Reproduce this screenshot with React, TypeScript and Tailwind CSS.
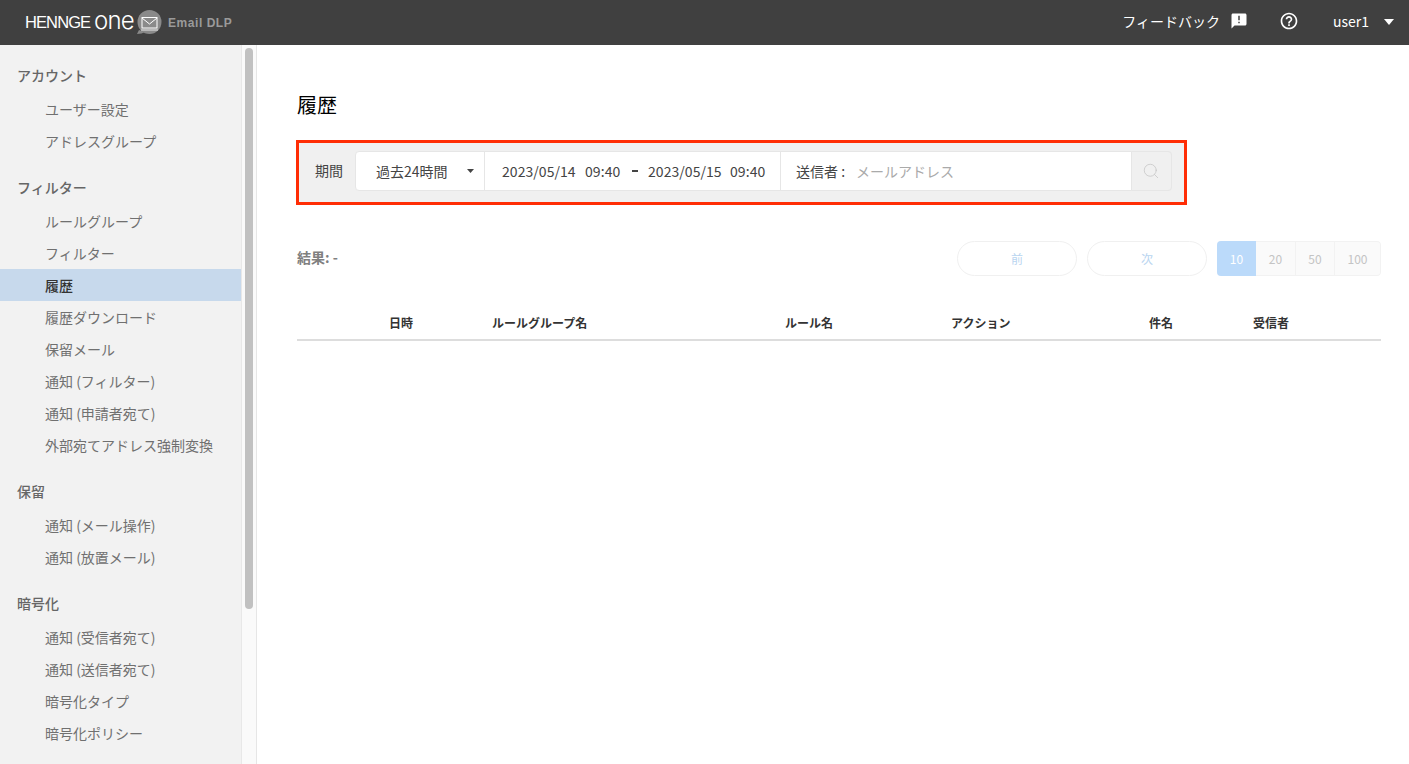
import React from 'react';
import { MdAnnouncement, MdHelpOutline } from 'react-icons/md';
import { Search } from 'lucide-react';

const font = '[font-family:"Noto_Sans_CJK_JP","Noto_Sans",sans-serif]';

const sections = [
  { title: 'アカウント', items: ['ユーザー設定', 'アドレスグループ'] },
  {
    title: 'フィルター',
    items: ['ルールグループ', 'フィルター', '履歴', '履歴ダウンロード', '保留メール', '通知 (フィルター)', '通知 (申請者宛て)', '外部宛てアドレス強制変換'],
  },
  { title: '保留', items: ['通知 (メール操作)', '通知 (放置メール)'] },
  { title: '暗号化', items: ['通知 (受信者宛て)', '通知 (送信者宛て)', '暗号化タイプ', '暗号化ポリシー'] },
];

const MailLogo = () => (
  <svg width="26" height="26" viewBox="0 0 26 26" className="shrink-0">
    <circle cx="13.5" cy="12" r="12" fill="#8a8a8a" />
    <path d="M3 20 L1 24 Q6 24 9 22 Z" fill="#8a8a8a" />
    <rect x="6" y="7.5" width="15" height="10.5" fill="none" stroke="#fff" strokeWidth="1" />
    <path d="M6 8 L13.5 14 L21 8" fill="none" stroke="#fff" strokeWidth="1" />
    <path d="M5 20 H22" stroke="#fff" strokeWidth="0.8" />
  </svg>
);

const Header = () => (
  <header className="h-[45px] shrink-0 bg-[#404040] flex items-center text-white pl-[25px] pr-[15px]">
    <span className="[font-family:'Liberation_Sans',sans-serif] text-[16.5px] tracking-[-0.9px] leading-none w-[69px]">HENNGE</span>
    <span className="[font-family:Inter,sans-serif] font-light text-[24px] leading-none -mt-[3px] tracking-[-0.8px] w-[40px]">one</span>
    <span className="ml-[2px] mt-[1px]"><MailLogo /></span>
    <span className="[font-family:'Liberation_Sans',sans-serif] font-bold text-[12px] tracking-[0.55px] text-[#9a9a9a] ml-[6px]">Email DLP</span>
    <div className="ml-auto flex items-center text-sm pb-[3px]">
      <span>フィードバック</span>
      <MdAnnouncement className="ml-[10px] text-[18px]" />
      <MdHelpOutline className="ml-[31px] text-[20px]" />
      <span className="ml-[34px]">user1</span>
      <svg width="10" height="6" viewBox="0 0 10 6" className="ml-[15px] mt-[2px]">
        <path d="M0 0 H10 L5 6 Z" fill="#fff" />
      </svg>
    </div>
  </header>
);

const Sidebar = () => (
  <div className="w-[257px] shrink-0 flex border-r border-[#e6e6e6]">
    <nav className="w-[241px] shrink-0 bg-[#f2f2f2] overflow-hidden">
      {sections.map((section) => (
        <div key={section.title}>
          <div className="pt-5 pb-2 pl-[17px] text-sm leading-5 font-medium text-[#666]">{section.title}</div>
          {section.items.map((item) => (
            <div
              key={item}
              className={
                item === '履歴'
                  ? 'h-8 leading-8 pl-[45px] text-sm font-medium text-[#333] bg-[#c7d9ec]'
                  : 'h-8 leading-8 pl-[45px] text-sm text-[#707070]'
              }
            >
              {item}
            </div>
          ))}
        </div>
      ))}
    </nav>
    <div className="flex-1 bg-[#fafafa] border-l border-[#e8e8e8] pt-[3px] flex justify-center">
      <div className="w-2 h-[561px] rounded bg-[#c1c1c1]" />
    </div>
  </div>
);

const FilterBar = () => (
  <div className="mt-[22px] -ml-px w-[891px] h-[65px] border-[3px] border-[#ff2d05] bg-[#f0f0f0] flex items-start pt-2 pl-4 pr-3 text-sm text-[#444]">
    <span className="w-[40px] shrink-0 leading-10 -mt-px">期間</span>
    <div className="flex-1 h-10 flex bg-white rounded border border-[#e6e6e6]">
      <div className="w-[129px] shrink-0 flex items-center pl-5 pb-px border-r border-[#e6e6e6]">
        <span>過去24時間</span>
        <svg width="7" height="4" viewBox="0 0 7 4" className="ml-[19px]">
          <path d="M0 0 H7 L3.5 4 Z" fill="#444" />
        </svg>
      </div>
      <div className="w-[296px] shrink-0 flex items-center pl-[17px] pb-px border-r border-[#e6e6e6]">
        <span className="w-[74px] whitespace-nowrap tracking-[0.05px]">2023/05/14</span>
        <span className="ml-[9px] w-[35px] whitespace-nowrap tracking-[0.1px]">09:40</span>
        <span className="w-[6px] h-[2px] bg-[#444] ml-[12px] mr-[10px]" />
        <span className="w-[74px] whitespace-nowrap tracking-[0.05px]">2023/05/15</span>
        <span className="ml-[8px] w-[35px] whitespace-nowrap tracking-[0.1px]">09:40</span>
      </div>
      <div className="flex-1 flex items-center pl-[15px] pb-px">
        <span>送信者 :</span>
        <span className="ml-[11px] text-[#aaa]">メールアドレス</span>
      </div>
      <div className="w-[41px] shrink-0 -my-px -mr-px flex items-center justify-center pr-[2px] pb-px bg-[#f0f0f0] border border-[#e6e6e6] rounded-r">
        <Search size={18} strokeWidth={1} className="text-[#c4c4c4]" />
      </div>
    </div>
  </div>
);

const Pager = () => (
  <div className="mt-9 h-[35px] flex items-center">
    <span className="text-sm font-bold text-[#808080] pb-[3px]">結果: -</span>
    <div className="ml-auto flex gap-2.5 text-xs text-[#b9d5f0]">
      <button className="w-[120px] h-[35px] rounded-full border border-[#f0f0f0] bg-white">前</button>
      <button className="w-[120px] h-[35px] rounded-full border border-[#f0f0f0] bg-white">次</button>
      <div className="flex h-[35px] rounded overflow-hidden text-[#c4c4c4] bg-[#fafafa]">
        <span className="w-[39px] flex items-center justify-center bg-[#bbdafa] text-white">10</span>
        <span className="w-[40px] flex items-center justify-center border-y border-r border-[#f2f2f2]">20</span>
        <span className="w-[39px] flex items-center justify-center border-y border-r border-[#f2f2f2]">50</span>
        <span className="w-[46px] flex items-center justify-center border-y border-r border-[#f2f2f2] rounded-r">100</span>
      </div>
    </div>
  </div>
);

const TableHead = () => (
  <div className="mt-[29px] h-9 pt-px grid grid-cols-[195px_293px_166px_198px_104px_1fr] items-center border-b-2 border-[#ddd] text-xs font-bold text-[#333]">
    <span className="pl-[92px]">日時</span>
    <span>ルールグループ名</span>
    <span>ルール名</span>
    <span>アクション</span>
    <span>件名</span>
    <span>受信者</span>
  </div>
);

export default function App() {
  return (
    <div className={`h-screen overflow-hidden flex flex-col bg-white ${font}`}>
      <Header />
      <div className="flex-1 min-h-0 flex">
        <Sidebar />
        <main className="flex-1 pl-10 pr-7 pt-[47px]">
          <h1 className="text-[20px] leading-[26px] text-black">履歴</h1>
          <FilterBar />
          <Pager />
          <TableHead />
        </main>
      </div>
    </div>
  );
}
